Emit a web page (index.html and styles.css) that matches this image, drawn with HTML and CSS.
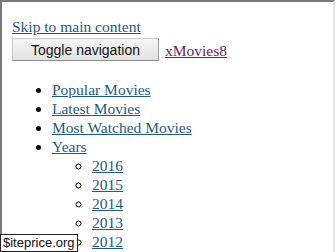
FILE: index.html
```html
<!DOCTYPE html>
<html lang="en">
<head>
  <meta charset="utf-8" />
  <link rel="stylesheet" href="styles.css">
  <title>xMovies8</title>
</head>
<body>
  <div class="frame">
    <a class="skip" href="#main">Skip to main content</a>
    <div class="navbar">
      <button class="toggle" type="button">Toggle navigation</button>
      <a class="brand" href="#">xMovies8</a>
    </div>
    <ul class="menu">
      <li><a href="#">Popular Movies</a></li>
      <li><a href="#">Latest Movies</a></li>
      <li><a href="#">Most Watched Movies</a></li>
      <li><a href="#">Years</a>
        <ul>
          <li><a href="#">2016</a></li>
          <li><a href="#">2015</a></li>
          <li><a href="#">2014</a></li>
          <li><a href="#">2013</a></li>
          <li><a href="#">2012</a></li>
        </ul>
      </li>
    </ul>
  </div>
  <div class="stamp">$iteprice.org</div>
</body>
</html>
```

FILE: styles.css
```css
html, body {
  margin: 0;
  height: 100%;
  overflow: hidden;
  background: white;
}
body {
  font-family: "Liberation Serif", "Times New Roman", serif;
  font-size: 15.5px;
  line-height: 19px;
  position: relative;
}
.frame {
  height: 100%;
  box-sizing: border-box;
  border-top: 2px solid #7b7b7b;
  border-left: 2px solid #7b7b7b;
  border-right: 2px solid #e4e4e4;
  margin-right: 1px;
  padding: 15px 0 0 10px;
}
a {
  color: #1d5a8a;
}
.skip {
  display: inline-block;
}
.navbar {
  display: flex;
  align-items: flex-end;
  gap: 6px;
  margin-top: 2px;
}
.toggle {
  width: 147px;
  height: 23px;
  padding: 0;
  font-family: "Liberation Sans", Arial, sans-serif;
  font-size: 14px;
  color: #111;
  background: linear-gradient(#f6f6f6, #e2e2e2);
  border: 1px solid #c9c9c9;
  border-bottom-color: #8a8a8a;
  border-right-color: #9a9a9a;
}
.brand {
  color: #6a1b6a;
  line-height: 19px;
  margin-bottom: 1px;
}
.menu {
  margin: 19px 0 0;
  padding-left: 40px;
}
.menu ul {
  margin: 0;
  padding-left: 40px;
  list-style: circle;
}
.stamp {
  position: absolute;
  left: 0;
  bottom: 0;
  background: white;
  border: 1px solid #222;
  padding: 0 2px;
  white-space: nowrap;
  font-family: "Liberation Sans", Arial, sans-serif;
  font-size: 13px;
  line-height: 16px;
  color: #111;
}
```
